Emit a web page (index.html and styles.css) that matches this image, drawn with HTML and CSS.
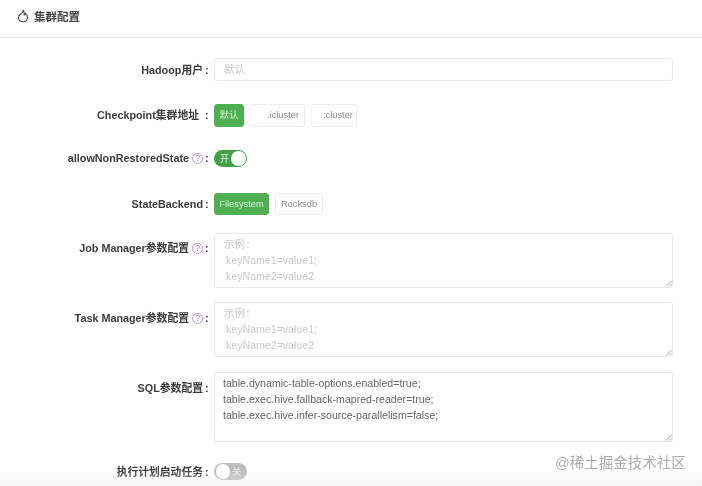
FILE: index.html
```html
<!DOCTYPE html>
<html lang="zh-CN">
<head>
<meta charset="utf-8">
<title>集群配置</title>
<link rel="stylesheet" href="styles.css">
</head>
<body>
<div class="page">
  <header class="head">
    <svg class="flame" width="12" height="14" viewBox="0 0 12 14"><path d="M6.200 1c.1 1.700-.6 2.500-1.400 3.100C3.400 5.100 1.500 6 1.500 8.500c0 2.400 2 4.200 4.500 4.200s4.500-1.800 4.500-4.200c0-1.900-1-3.200-2.100-4.200-.1 1-.5 1.500-1.100 1.700.1-2-.5-3.800-1.100-5z" fill="none" stroke="#444" stroke-width="1.100"/></svg>
    <span class="title">集群配置</span>
  </header>
  <form class="form">
    <div class="row r1">
      <label class="label low">Hadoop用户<span class="colon">:</span></label>
      <div class="input ph">默认</div>
    </div>
    <div class="row r2">
      <label class="label">Checkpoint集群地址<span class="colon wide">:</span></label>
      <div class="group">
        <span class="btn on btn-default">默认</span>
        <span class="btn masked m1">.icluster</span>
        <span class="btn masked m2">:cluster</span>
      </div>
    </div>
    <div class="row r3">
      <label class="label">allowNonRestoredState<span class="help">?</span><span class="colon">:</span></label>
      <span class="switch active"><span class="sw-text">开</span><span class="knob"></span></span>
    </div>
    <div class="row r4">
      <label class="label">StateBackend<span class="colon">:</span></label>
      <div class="group">
        <span class="btn on fs">Filesystem</span>
        <span class="btn rd">Rocksdb</span>
      </div>
    </div>
    <div class="row r5">
      <label class="label lt">Job Manager参数配置<span class="help">?</span><span class="colon">:</span></label>
      <div class="area ph h55">
        <div class="cn">示例：</div>
        <div>keyName1=value1;</div>
        <div>keyName2=value2</div>
        <svg class="grip" width="7" height="7" viewBox="0 0 7 7"><path d="M1 6.500 6.500 1M4 6.500 6.500 4" stroke="#888" stroke-width=".8"/></svg>
      </div>
    </div>
    <div class="row r6">
      <label class="label lt lt2">Task Manager参数配置<span class="help">?</span><span class="colon">:</span></label>
      <div class="area ph h55">
        <div class="cn">示例：</div>
        <div>keyName1=value1;</div>
        <div>keyName2=value2</div>
        <svg class="grip" width="7" height="7" viewBox="0 0 7 7"><path d="M1 6.500 6.500 1M4 6.500 6.500 4" stroke="#888" stroke-width=".8"/></svg>
      </div>
    </div>
    <div class="row r7">
      <label class="label lt lt2">SQL参数配置<span class="colon">:</span></label>
      <div class="area val h70">
        <div>table.dynamic-table-options.enabled=true;</div>
        <div>table.exec.hive.fallback-mapred-reader=true;</div>
        <div>table.exec.hive.infer-source-parallelism=false;</div>
        <svg class="grip" width="7" height="7" viewBox="0 0 7 7"><path d="M1 6.500 6.500 1M4 6.500 6.500 4" stroke="#888" stroke-width=".8"/></svg>
      </div>
    </div>
    <div class="row r8">
      <label class="label low">执行计划启动任务<span class="colon">:</span></label>
      <span class="switch off"><span class="knob"></span><span class="sw-text">关</span></span>
    </div>
  </form>
  <div class="fade"></div>
  <div class="mark">@稀土掘金技术社区</div>
</div>
</body>
</html>
```
FILE: styles.css
```css
* { box-sizing: border-box; }
html, body { margin: 0; padding: 0; background: #fff; }
body {
  font-family: "Liberation Sans", "Noto Sans CJK SC", sans-serif;
  overflow: hidden;
}
.page {
  position: relative;
  width: 702px;
  height: 486px;
  overflow: hidden;
  filter: blur(.5px);
}
.head {
  height: 38px;
  border-bottom: 1px solid #e9e9e9;
  display: flex;
  align-items: center;
  gap: 5px;
  padding: 0 0 6px 17px;
}
.flame { flex: none; }
.title { font-size: 11.500px; font-weight: 700; color: #444; }
.form { padding-top: 20px; }
.row { display: flex; align-items: center; gap: 6px; padding-right: 29px; }
.r2 { margin-top: 23px; }
.r3 { margin-top: 23px; }
.r4 { margin-top: 26px; }
.r5 { margin-top: 18px; align-items: flex-start; }
.r6 { margin-top: 14px; align-items: flex-start; }
.r7 { margin-top: 15px; align-items: flex-start; }
.r8 { margin-top: 21px; }
.label {
  flex: none;
  width: 208px;
  display: flex;
  align-items: center;
  justify-content: flex-end;
  white-space: pre;
  font-size: 10.800px;
  line-height: 13px;
  font-weight: 700;
  color: #3c3c3c;
  padding-right: 0;
}
.low { padding-top: 2px; }
.colon { width: 3px; margin-left: 2px; flex: none; }
.colon.wide { margin-left: 6px; }
.lt { padding-top: 9px; }
.lt2 { padding-top: 10px; }
.help {
  flex: none;
  width: 11px;
  height: 11px;
  margin-left: 3px;
  border: 1px solid #bb8fd2;
  border-radius: 50%;
  color: #a56cc4;
  font-size: 8.500px;
  font-weight: 400;
  line-height: 9px;
  text-align: center;
}
.input {
  flex: 1;
  height: 23px;
  border: 1px solid #e8e8e8;
  border-radius: 3px;
  padding-left: 9px;
  font-size: 10.500px;
  line-height: 21px;
}
.ph { color: #c8c8c8; }
.val { color: #666; }
.group { display: flex; gap: 6px; }
.btn {
  height: 23px;
  border: 1px solid #ececec;
  border-radius: 3px;
  font-size: 9.300px;
  line-height: 21px;
  color: #8a8a8a;
  text-align: center;
  background: #fff;
}
.r4 .btn { height: 22px; line-height: 20px; }
.on { background: #4caf50; border-color: #4caf50; color: #dff0df; }
.btn-default { width: 30px; }
.m1 { width: 55px; padding-left: 16px; text-align: left; border-left-color: #f6f6f6; }
.m2 { width: 46px; padding-left: 11px; text-align: left; border-left-color: #f6f6f6; }
.fs { width: 55px; }
.rd { width: 48px; }
.switch {
  display: flex;
  align-items: center;
  justify-content: space-between;
  width: 33px;
  height: 17px;
  border-radius: 9px;
  font-size: 9px;
  color: #e6f3e6;
}
.active { background: #43a047; padding: 0 1.500px 0 6px; }
.off { background: #bdbdbd; padding: 0 6px 0 1.500px; }
.knob { width: 14.500px; height: 14.500px; background: #fff; border-radius: 50%; }
.area {
  position: relative;
  flex: 1;
  border: 1px solid #e8e8e8;
  border-radius: 3px;
  padding: 2px 9px;
  font-size: 10.600px;
  line-height: 16px;
}
.val.area { padding-left: 8px; }
.ph.area > div:not(.cn) { padding-left: 2px; }
.h55 { height: 55px; }
.h70 { height: 70px; }
.grip { position: absolute; right: 0; bottom: 0; }
.fade {
  position: absolute;
  left: 0;
  right: 0;
  bottom: 0;
  height: 16px;
  background: linear-gradient(to bottom, rgba(238,238,238,0), rgba(236,236,236,.55));
}
.mark {
  position: absolute;
  left: 555px;
  top: 454px;
  font-size: 14.500px;
  line-height: 18px;
  color: #adadad;
  white-space: nowrap;
}
```
